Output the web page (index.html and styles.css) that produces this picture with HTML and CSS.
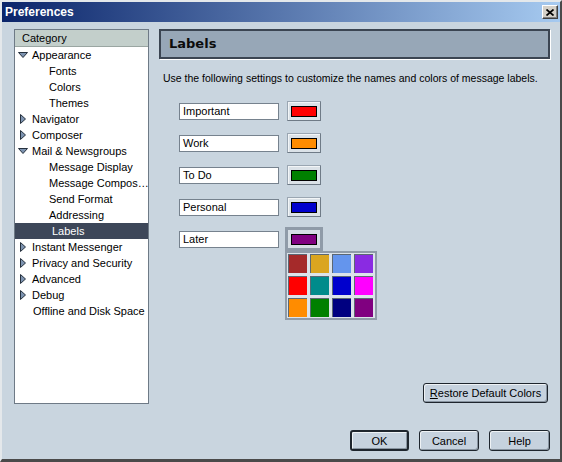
FILE: index.html
```html
<!DOCTYPE html>
<html>
<head>
<meta charset="utf-8">
<title>Preferences</title>
<link rel="stylesheet" href="styles.css">
</head>
<body>
<div class="window">
  <div class="titlebar">
    <span class="title">Preferences</span>
    <span class="close"><svg width="8" height="7" viewBox="0 0 8 7"><path d="M0.5 0.5 L7.5 6.5 M7.5 0.5 L0.5 6.5" stroke="#000" stroke-width="1.7" fill="none"/></svg></span>
  </div>
  <div class="content">
    <div class="main">
      <div class="tree">
        <div class="tree-head">Category</div>
        <ul class="tree-list">
          <li class="node"><svg class="twisty" width="10" height="10" viewBox="0 0 10 10"><path d="M0.5 2.5 H9.5 L5 7.5 Z" fill="#7d93b0" stroke="#26313e" stroke-width="1"/></svg>Appearance</li>
          <li class="leaf">Fonts</li>
          <li class="leaf">Colors</li>
          <li class="leaf">Themes</li>
          <li class="node"><svg class="twisty" width="10" height="10" viewBox="0 0 10 10"><path d="M2.5 0.5 V9.5 L7.5 5 Z" fill="#7d93b0" stroke="#26313e" stroke-width="1"/></svg>Navigator</li>
          <li class="node"><svg class="twisty" width="10" height="10" viewBox="0 0 10 10"><path d="M2.5 0.5 V9.5 L7.5 5 Z" fill="#7d93b0" stroke="#26313e" stroke-width="1"/></svg>Composer</li>
          <li class="node"><svg class="twisty" width="10" height="10" viewBox="0 0 10 10"><path d="M0.5 2.5 H9.5 L5 7.5 Z" fill="#7d93b0" stroke="#26313e" stroke-width="1"/></svg>Mail &amp; Newsgroups</li>
          <li class="leaf">Message Display</li>
          <li class="leaf">Message Compos…</li>
          <li class="leaf">Send Format</li>
          <li class="leaf">Addressing</li>
          <li class="leaf selected">Labels</li>
          <li class="node"><svg class="twisty" width="10" height="10" viewBox="0 0 10 10"><path d="M2.5 0.5 V9.5 L7.5 5 Z" fill="#7d93b0" stroke="#26313e" stroke-width="1"/></svg>Instant Messenger</li>
          <li class="node"><svg class="twisty" width="10" height="10" viewBox="0 0 10 10"><path d="M2.5 0.5 V9.5 L7.5 5 Z" fill="#7d93b0" stroke="#26313e" stroke-width="1"/></svg>Privacy and Security</li>
          <li class="node"><svg class="twisty" width="10" height="10" viewBox="0 0 10 10"><path d="M2.5 0.5 V9.5 L7.5 5 Z" fill="#7d93b0" stroke="#26313e" stroke-width="1"/></svg>Advanced</li>
          <li class="node"><svg class="twisty" width="10" height="10" viewBox="0 0 10 10"><path d="M2.5 0.5 V9.5 L7.5 5 Z" fill="#7d93b0" stroke="#26313e" stroke-width="1"/></svg>Debug</li>
          <li class="plain">Offline and Disk Space</li>
        </ul>
      </div>
      <div class="panel">
        <div class="panel-head">Labels</div>
        <p class="desc">Use the following settings to customize the names and colors of message labels.</p>
        <div class="label-rows">
          <div class="label-row"><span class="field">Important</span><span class="color-btn"><span class="swatch c-red"></span></span></div>
          <div class="label-row"><span class="field">Work</span><span class="color-btn"><span class="swatch c-orange"></span></span></div>
          <div class="label-row"><span class="field">To Do</span><span class="color-btn"><span class="swatch c-green"></span></span></div>
          <div class="label-row"><span class="field">Personal</span><span class="color-btn"><span class="swatch c-blue"></span></span></div>
          <div class="label-row"><span class="field">Later</span>
            <span class="picker">
              <span class="color-btn open"><span class="swatch c-purple"></span></span>
              <span class="palette">
                <span class="cell p1"></span><span class="cell p2"></span><span class="cell p3"></span><span class="cell p4"></span>
                <span class="cell p5"></span><span class="cell p6"></span><span class="cell p7"></span><span class="cell p8"></span>
                <span class="cell p9"></span><span class="cell p10"></span><span class="cell p11"></span><span class="cell p12"></span>
              </span>
            </span>
          </div>
        </div>
        <div class="restore-row"><span class="btn restore"><u>R</u>estore Default Colors</span></div>
      </div>
    </div>
    <div class="footer">
      <span class="btn ok">OK</span>
      <span class="btn cancel">Cancel</span>
      <span class="btn help">Help</span>
    </div>
  </div>
</div>
</body>
</html>
```
FILE: styles.css
```css
html, body {
  margin: 0;
  padding: 0;
}
body {
  width: 562px;
  height: 462px;
  overflow: hidden;
  font-family: "Liberation Sans", Arial, sans-serif;
  font-size: 11px;
  color: #000;
}
.window {
  box-sizing: border-box;
  width: 562px;
  height: 462px;
  background: #c9d5df;
  border-style: solid;
  border-width: 2px 2px 3px 2px;
  border-color: #e4e8eb #4a4a4a #4a4a4a #e4e8eb;
  display: flex;
  flex-direction: column;
}
.titlebar {
  height: 20px;
  flex: none;
  display: flex;
  align-items: center;
  padding: 0 2px 0 3px;
  background: linear-gradient(to right, #0a246a, #a6caf0);
}
.title {
  color: #fff;
  font-weight: bold;
  font-size: 12px;
}
.close {
  margin-left: auto;
  box-sizing: border-box;
  width: 16px;
  height: 14px;
  background: #d4d0c8;
  border: 1px solid;
  border-color: #fff #404040 #404040 #fff;
  box-shadow: inset -1px -1px 0 #808080;
  display: flex;
  align-items: center;
  justify-content: center;
}
.close svg { display: block; }
.content {
  flex: 1;
  display: flex;
  flex-direction: column;
  padding: 7px 10px 0 12px;
  min-width: 0;
}
.main {
  display: flex;
  gap: 10px;
  height: 375px;
}
.tree {
  box-sizing: border-box;
  width: 135px;
  flex: none;
  border: 1px solid #6e7a86;
  background: #fff;
}
.tree-head {
  height: 17px;
  box-sizing: border-box;
  line-height: 17px;
  padding-left: 7px;
  background: #c3cfcb;
  border-bottom: 1px solid #9aa6a2;
}
.tree-list {
  list-style: none;
  margin: 0;
  padding: 0;
}
.tree-list li {
  height: 16px;
  line-height: 17px;
  display: flex;
  align-items: center;
  white-space: nowrap;
}
.tree-list .node {
  padding-left: 3px;
}
.twisty {
  flex: none;
  margin-right: 4px;
}
.tree-list .leaf {
  padding-left: 34px;
}
.tree-list .plain {
  padding-left: 18px;
}
.tree-list .selected {
  background: #3d4759;
  color: #fff;
  padding-left: 37px;
}
.panel {
  flex: 1;
  min-width: 0;
  display: flex;
  flex-direction: column;
}
.panel-head {
  box-sizing: border-box;
  height: 30px;
  border: 2px solid #3b4552;
  box-shadow: 1px 1px 0 #fff;
  background: #97a7b7;
  padding-left: 8px;
  line-height: 26px;
  font-family: "DejaVu Sans", sans-serif;
  font-weight: bold;
  font-size: 13px;
  color: #0c0c0c;
}
.desc {
  margin: 12px 0 0 4px;
  line-height: 14px;
  font-size: 10.5px;
  white-space: nowrap;
}
.label-rows {
  margin-top: 16px;
  display: flex;
  flex-direction: column;
  gap: 12px;
}
.label-row {
  display: flex;
  align-items: center;
  height: 20px;
  margin-left: 20px;
  gap: 8px;
}
.field {
  box-sizing: border-box;
  width: 100px;
  height: 17px;
  background: #fff;
  border: 1px solid #76828e;
  padding-left: 3px;
  line-height: 15px;
}
.color-btn {
  box-sizing: border-box;
  width: 34px;
  height: 20px;
  background: #dbe2e8;
  border: 1px solid;
  border-color: #9aa6b2 #6f7b87 #6f7b87 #9aa6b2;
  box-shadow: inset 1px 1px 0 #f2f5f7;
  display: flex;
  align-items: center;
  justify-content: center;
}
.color-btn.open {
  border-color: #8f9ba8;
  box-shadow: 0 0 0 2px #8f9ba8;
  background: #d6dee5;
}
.swatch {
  box-sizing: border-box;
  width: 26px;
  height: 11px;
  border: 1px solid #000;
}
.c-red { background: #ff0000; }
.c-orange { background: #ff8c00; }
.c-green { background: #008000; }
.c-blue { background: #0000cd; }
.c-purple { background: #800080; }
.picker {
  position: relative;
  display: flex;
}
.palette {
  position: absolute;
  left: -2px;
  top: 22px;
  box-sizing: border-box;
  width: 92px;
  height: 69px;
  padding: 1px;
  border: 2px solid #8f9ba8;
  background: #dce3ea;
  display: grid;
  grid-template-columns: repeat(4, 19px);
  grid-auto-rows: 19px;
  gap: 3px;
}
.cell {
  box-sizing: border-box;
  border-top: 1px solid #5b6773;
  border-left: 1px solid #5b6773;
}
.p1 { background: #a52a2a; }
.p2 { background: #daa520; }
.p3 { background: #6495ed; }
.p4 { background: #8a2be2; }
.p5 { background: #ff0000; }
.p6 { background: #008b8b; }
.p7 { background: #0000cd; }
.p8 { background: #ff00ff; }
.p9 { background: #ff8c00; }
.p10 { background: #008000; }
.p11 { background: #000080; }
.p12 { background: #800080; }
.restore-row {
  margin-top: auto;
  margin-bottom: 1px;
  display: flex;
  justify-content: flex-end;
  padding-right: 2px;
}
.btn {
  box-sizing: border-box;
  height: 20px;
  display: flex;
  align-items: center;
  justify-content: center;
  border: 1px solid #1e252d;
  border-radius: 3px;
  background: #c6d2de;
  box-shadow: inset 1px 1px 0 #eef2f5, inset -1px -1px 0 #8894a0;
  white-space: nowrap;
}
.btn u {
  text-decoration: underline;
}
.restore {
  width: 125px;
}
.footer {
  display: flex;
  justify-content: flex-end;
  gap: 10px;
  margin-top: 26px;
}
.footer .btn {
  height: 21px;
}
.ok {
  width: 59px;
  border-width: 2px;
}
.cancel {
  width: 60px;
}
.help {
  width: 61px;
}
```
